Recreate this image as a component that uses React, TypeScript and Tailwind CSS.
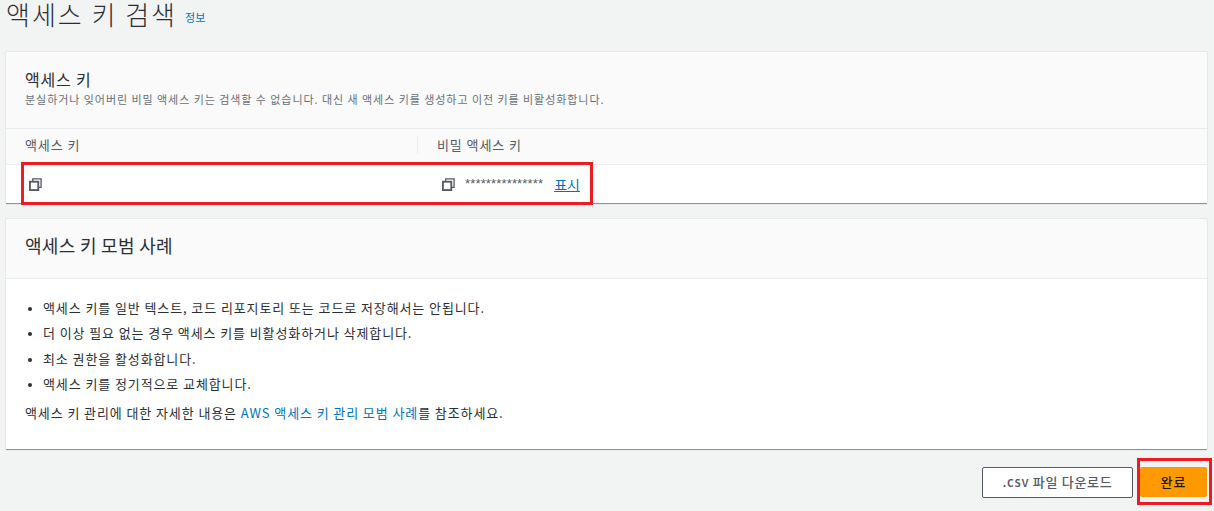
const font = { fontFamily: '"Noto Sans CJK KR", "Liberation Sans", sans-serif' };

const CopyIcon = () => (
  <svg viewBox="0 0 14 14" fill="none" stroke="#545b64" strokeWidth={2} className="h-[13px] w-[13px] shrink-0">
    <rect x="1" y="4" width="9" height="9" />
    <path d="M4 4V1h9v9h-3" strokeWidth={1.4} />
  </svg>
);

const practices = [
  "액세스 키를 일반 텍스트, 코드 리포지토리 또는 코드로 저장해서는 안됩니다.",
  "더 이상 필요 없는 경우 액세스 키를 비활성화하거나 삭제합니다.",
  "최소 권한을 활성화합니다.",
  "액세스 키를 정기적으로 교체합니다.",
];

export default function App() {
  return (
    <div className="relative h-[511px] w-[1214px] overflow-hidden bg-[#f2f3f3] text-[#16191f]" style={font}>
      <div className="flex h-[52px] items-start pl-[6px]">
        <h1 className="text-[26px] leading-[27px] font-light tracking-[2px] text-[#2a2e33]">액세스 키 검색</h1>
        <a className="mt-[10px] ml-[8px] text-[11px] leading-[14px] text-[#0073bb]">정보</a>
      </div>

      <section className="mr-[7px] ml-[6px] h-[152px] border-b border-b-[#8d9499] bg-white shadow-[0_0_1px_#aab7b8]">
        <div className="h-[77px] border-b border-[#eaeded] bg-[#fafafa] px-[19px] pt-[16px]">
          <h2 className="text-[16px] leading-[22px] font-normal tracking-[0.8px] text-[#2b2f34]">액세스 키</h2>
          <p className="mt-[2px] text-[11px] leading-[14px] tracking-[0.95px] text-[#687078]">
            분실하거나 잊어버린 비밀 액세스 키는 검색할 수 없습니다. 대신 새 액세스 키를 생성하고 이전 키를 비활성화합니다.
          </p>
        </div>
        <div className="flex h-[36px] items-center border-b border-[#eaeded] bg-[#fafafa] pb-[3px] text-[13px] tracking-[0.9px] text-[#545b64]">
          <div className="w-[411px] pl-[19px]">액세스 키</div>
          <div className="flex h-[18px] items-center border-l border-[#eaeded] pl-[19px]">비밀 액세스 키</div>
        </div>
        <div className="flex h-[38px] items-center">
          <div className="w-[411px] pl-[23px]">
            <CopyIcon />
          </div>
          <div className="flex items-center pl-[25px]">
            <CopyIcon />
            <span className="ml-[10px] font-['Liberation_Sans'] text-[13px] tracking-[0.15px] text-[#545b64]">***************</span>
            <a className="ml-[11px] text-[14px] text-[#0073bb] underline">표시</a>
          </div>
        </div>
      </section>

      <section className="mt-[15px] mr-[7px] ml-[6px] h-[231px] border-b border-b-[#8d9499] bg-white shadow-[0_0_1px_#aab7b8]">
        <div className="flex h-[60px] items-start border-b border-[#eaeded] bg-[#fafafa] px-[19px] pt-[14px]">
          <h2 className="text-[18px] leading-[24px] font-normal tracking-[0.3px] text-[#2b2f34]">액세스 키 모범 사례</h2>
        </div>
        <div className="px-[19px] pt-[16px] text-[13px] leading-[25.4px] tracking-[0.9px] text-[#2b2f34]">
          <ul className="list-disc pl-[18px] marker:text-[11px]">
            {practices.map((text) => (
              <li key={text}>{text}</li>
            ))}
          </ul>
          <p className="mt-[3px]">
            액세스 키 관리에 대한 자세한 내용은 <a className="text-[#0073bb]">AWS 액세스 키 관리 모범 사례</a>를 참조하세요.
          </p>
        </div>
      </section>

      <div className="mt-[17px] flex justify-end gap-[7px] pr-[7px]">
        <button className="h-[31px] w-[151px] rounded-[2px] border border-[#545b64] bg-white pb-[1px] text-[13px] font-medium tracking-[0.7px] text-[#545b64]">
          .csv 파일 다운로드
        </button>
        <button className="h-[30px] w-[67px] rounded-[2px] bg-[#ff9900] pb-[1px] text-[13px] font-medium tracking-[1px] text-[#16191f]">완료</button>
      </div>

      <div className="absolute top-[162px] left-[21px] h-[43px] w-[572px] border-[3px] border-[#ed1c24]" />
      <div className="absolute top-[458px] left-[1137px] h-[47px] w-[75px] border-[3px] border-[#ed1c24]" />
    </div>
  );
}
